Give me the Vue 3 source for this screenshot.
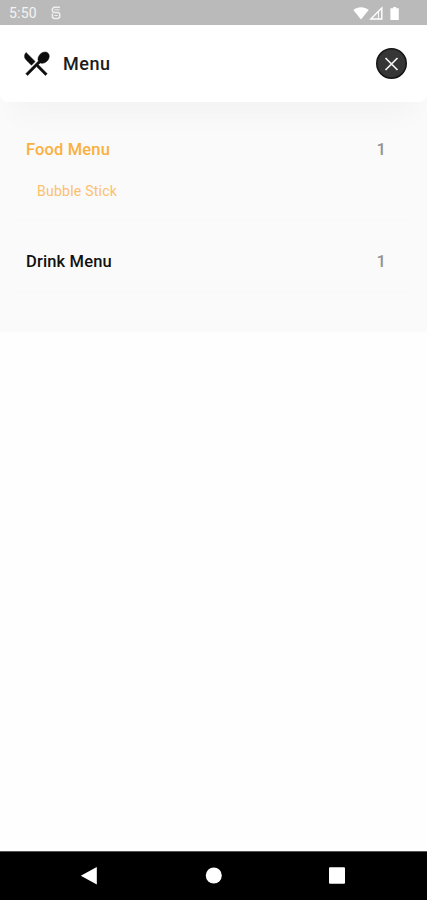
<template>
	<div class="screen">
		<div class="status-bar">
			<span class="status-bar__time">5:50</span>
			<svg class="status-bar__app" width="10" height="14" viewBox="0 0 10 14" fill="none" stroke="currentColor"
				stroke-width="1.5">
				<path d="M8.900 1.300H2.900L1.400 2.800v2.600l1.400 1h4.600l1.300 1.200v3.500l-1.400 1.500H2.800l-1.400-1.500V7.400" />
				<path d="M3.200 3.800h5.500M3.400 9.500h3.400" stroke-width="1" />
			</svg>
			<svg class="status-bar__system" width="48" height="15" viewBox="0 0 48 15" fill="currentColor">
				<path d="M.3 4C4.800.3 11.200.3 15.700 4L8 13.500z" />
				<path d="M28.800 2v11H17.800z" fill="none" stroke="currentColor" stroke-width="1.400" />
				<path d="M25.500 6v7" fill="none" stroke="currentColor" stroke-width=".9" />
				<path d="M40.200 1h3v1.300h2.600v11.700h-8.400V2.300h2.800z" />
			</svg>
		</div>

		<header class="menu-header">
			<svg class="menu-header__icon" width="31" height="31" viewBox="0 0 24 24" fill="currentColor"
				stroke="currentColor" stroke-width=".4">
				<path
					d="M8.1 13.34l2.83-2.83L3.91 3.5a4.008 4.008 0 000 5.66l4.19 4.18zm6.78-1.81c1.53.71 3.68.21 5.27-1.38 1.91-1.91 2.28-4.65.81-6.12-1.46-1.46-4.2-1.1-6.12.81-1.59 1.59-2.09 3.74-1.38 5.27L3.7 19.87l1.41 1.41L12 14.41l6.88 6.88 1.41-1.41L13.41 13l1.47-1.47z" />
			</svg>
			<h1 class="menu-header__title">Menu</h1>
			<button class="menu-header__close" aria-label="Close" @click="openId = null">
				<svg width="31" height="31" viewBox="0 0 31 31" fill="none">
					<circle cx="15.5" cy="15.5" r="14.7" fill="#363636" stroke="#161616" stroke-width="1.6" />
					<path d="M9.500 10l12 12M21.500 10l-12 12" stroke="#f5f5f5" stroke-width="1.700" />
				</svg>
			</button>
		</header>

		<main class="menu-list">
			<section v-for="group in groups" :key="group.id" class="menu-group"
				:class="{ 'menu-group--open': group.id === openId }">
				<div class="menu-group__head" @click="toggle(group.id)">
					<span>{{ group.name }}</span>
					<span class="menu-group__count">{{ group.items.length }}</span>
				</div>
				<template v-if="group.id === openId">
					<div v-for="item in group.items" :key="item" class="menu-group__item">{{ item }}</div>
				</template>
			</section>
		</main>

		<nav class="nav-bar">
			<svg width="18" height="18" viewBox="0 0 18 18" fill="currentColor">
				<path d="M.8 8.700L16.800 0v17.400z" />
			</svg>
			<svg width="18" height="18" viewBox="0 0 18 18" fill="currentColor">
				<circle cx="9.800" cy="8.500" r="8" />
			</svg>
			<svg width="18" height="18" viewBox="0 0 18 18" fill="currentColor">
				<rect x="1" y=".3" width="16" height="16.500" rx="1" />
			</svg>
		</nav>
	</div>
</template>

<script setup>
import { ref } from "vue";

const groups = [
	{ id: "food", name: "Food Menu", items: ["Bubble Stick"] },
	{ id: "drink", name: "Drink Menu", items: ["Drinks"] },
];

const openId = ref("food");

function toggle(id) {
	openId.value = openId.value === id ? null : id;
}
</script>

<style>
body {
	background: #fff;
}
</style>

<style scoped>
.screen {
	display: flex;
	flex-direction: column;
	height: 100vh;
	overflow: hidden;
	background: #fefefe;
	font-family: Roboto, sans-serif;
}

.status-bar {
	display: flex;
	align-items: center;
	flex: none;
	height: 25px;
	padding: 1px 26px 0 9px;
	box-sizing: border-box;
	background: #bababa;
	color: #fff;
}

.status-bar__time {
	width: 42px;
	font-size: 14px;
	line-height: 24px;
	letter-spacing: 0.2px;
	color: #f4f4f4;
}

.status-bar__app {
	color: #eee;
}

.status-bar__system {
	margin-left: auto;
}

.menu-header {
	z-index: 1;
	display: flex;
	align-items: center;
	flex: none;
	height: 77px;
	padding: 0 20px 0 21px;
	box-sizing: border-box;
	border-radius: 0 0 8px 8px;
	background: #fff;
	box-shadow: 0 26px 28px -14px rgba(0, 0, 0, 0.03);
}

.menu-header__icon {
	color: #0c0c0c;
}

.menu-header__title {
	margin: 0 0 0 11px;
	font-size: 18px;
	font-weight: 500;
	line-height: 24px;
	letter-spacing: 0.5px;
	color: #1c1c1c;
}

.menu-header__close {
	display: flex;
	margin-left: auto;
	padding: 0;
	border: 0;
	background: none;
}

/* Slides under the header so its rounded corners show the list colour */
.menu-list {
	flex: none;
	height: 240px;
	margin-top: -10px;
	padding: 34px 15px 0;
	box-sizing: border-box;
	background: #fafafa;
}

.menu-group {
	height: 73px;
	padding: 12px 26px 0 11px;
	box-sizing: border-box;
	border-bottom: 1px solid #f8f8f8;
	color: #111;
}

.menu-group--open {
	height: 94px;
	color: #fbb040;
}

.menu-group:not(:first-child) {
	padding-top: 30px;
}

.menu-group__head {
	display: flex;
	justify-content: space-between;
	font-size: 16.5px;
	font-weight: 500;
	line-height: 24px;
	letter-spacing: 0.15px;
}

.menu-group__count {
	color: #919191;
}

.menu-group__item {
	padding: 19px 0 0 11px;
	font-size: 14px;
	line-height: 20px;
	letter-spacing: 0.25px;
	color: #fcc06c;
}

.nav-bar {
	display: flex;
	align-items: center;
	justify-content: space-between;
	flex: none;
	height: 49px;
	margin-top: auto;
	padding: 0 81px 0 80px;
	box-sizing: border-box;
	border-top: 1px solid #555;
	background: #000;
	color: #fff;
}
</style>
